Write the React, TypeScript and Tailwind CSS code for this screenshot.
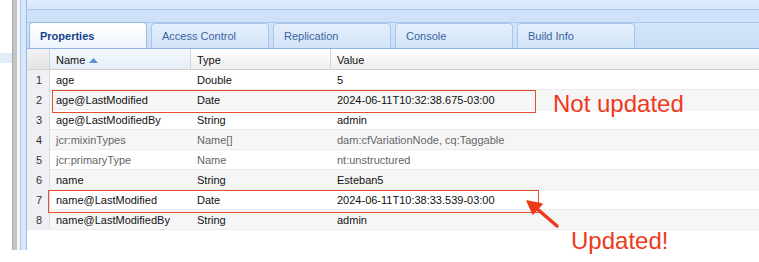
import React from 'react'

const tabs = ['Properties', 'Access Control', 'Replication', 'Console', 'Build Info']

const rows = [
  { name: 'age', type: 'Double', value: '5' },
  { name: 'age@LastModified', type: 'Date', value: '2024-06-11T10:32:38.675-03:00' },
  { name: 'age@LastModifiedBy', type: 'String', value: 'admin' },
  { name: 'jcr:mixinTypes', type: 'Name[]', value: 'dam:cfVariationNode, cq:Taggable', dim: true },
  { name: 'jcr:primaryType', type: 'Name', value: 'nt:unstructured', dim: true },
  { name: 'name', type: 'String', value: 'Esteban5' },
  { name: 'name@LastModified', type: 'Date', value: '2024-06-11T10:38:33.539-03:00' },
  { name: 'name@LastModifiedBy', type: 'String', value: 'admin' },
]

function Tab({ label, active }: { label: string; active: boolean }) {
  return (
    <div
      className={`w-[118px] rounded-t-[4px] border border-b-0 flex items-center pl-[10px] pt-[1px] text-[11px] ${
        active
          ? 'bg-gradient-to-b from-white to-[#eef4fc] border-[#99bbe8] text-[#15428b] font-bold h-[26px]'
          : 'bg-gradient-to-b from-[#e4effc] to-[#d3e4f8] border-[#a9c6ea] text-[#3a64a0] h-[25px]'
      }`}
    >
      {label}
    </div>
  )
}

export default function App() {
  return (
    <div className="relative w-[759px] h-[262px] bg-white overflow-hidden flex font-['Liberation_Sans',Arial,sans-serif] text-[#111]">
      {/* left tree strip */}
      <div className="w-[12px] flex flex-col">
        <div className="h-[53px]" />
        <div className="h-[10px] bg-[#e2edfb]" />
      </div>
      <div className="w-[5px] h-[250px] bg-[#c4c4c4] border-l border-[#adadad]" />
      <div className="w-[3px] h-[250px] bg-[#f4f6f9]" />

      {/* panel */}
      <div className="flex-1 h-[250px] border-l border-[#a9c8ec] bg-[#d8e7fa] pl-[5px] flex">
        <div className="flex-1 border-l border-[#99bbe8] flex flex-col bg-white">
          <div className="h-[10px] bg-gradient-to-b from-[#e0edfc] to-[#d5e6fa] border-b border-[#a8c8ee]" />
          <div className="h-[13px] bg-[#cfe1f8] border-b border-[#a8c8ee]" />
          <div className="h-[26px] bg-gradient-to-b from-[#d3e5fa] to-[#c9ddf6] border-b border-[#8fb4e3] flex items-end gap-[4px] pl-[2px]">
            {tabs.map((t, i) => (
              <Tab key={t} label={t} active={i === 0} />
            ))}
          </div>

          {/* grid header */}
          <div className="h-[21px] flex text-[11px] border-b border-[#d0d0d0] bg-gradient-to-b from-white to-[#eeeeee]">
            <div className="w-[23px] bg-gradient-to-b from-[#f2f2f2] to-[#e4e4e4] border-r border-[#d4d4d4]" />
            <div className="w-[141px] border-r border-[#d4d4d4] flex items-center pl-[6px] pt-[2px] bg-gradient-to-b from-[#f4f8fd] to-[#e6eef8]">
              Name
              <svg width="9" height="5" viewBox="0 0 9 5" className="ml-[4px]">
                <path d="M0 5 L4.5 0 L9 5 Z" fill="#5b8fd0" />
              </svg>
            </div>
            <div className="w-[140px] border-r border-[#d4d4d4] flex items-center pl-[6px] pt-[2px]">Type</div>
            <div className="flex-1 flex items-center pl-[6px] pt-[2px]">Value</div>
          </div>

          {rows.map((r, i) => (
            <div
              key={r.name}
              className={`h-[20px] flex text-[11px] border-b border-[#ebebeb] ${i % 2 === 1 ? 'bg-[#f6f6f7]' : 'bg-white'} ${
                r.dim ? 'text-[#666]' : 'text-[#111]'
              }`}
            >
              <div className="w-[23px] bg-[#eef0f3] border-r border-[#dcdcdc] flex items-center justify-center text-[#333] pl-[2px] pt-[2px]">
                {i + 1}
              </div>
              <div className="w-[141px] flex items-center pl-[6px] pt-[2px]">{r.name}</div>
              <div className="w-[140px] flex items-center pl-[6px] pt-[2px]">{r.type}</div>
              <div className="flex-1 flex items-center pl-[6px] pt-[2px]">{r.value}</div>
            </div>
          ))}
        </div>
      </div>

      {/* annotations */}
      <div className="absolute left-[52px] top-[90px] w-[484px] h-[23px] border-[1.5px] border-[#e4502f]" />
      <div className="absolute left-[48px] top-[190px] w-[491px] h-[23px] border-[1.5px] border-[#e4502f]" />
      <div className="absolute left-[553px] top-[92px] text-[24px] leading-none text-[#ee3a1c]">
        Not updated
      </div>
      <div className="absolute left-[571px] top-[229px] text-[24px] leading-none text-[#ee3a1c]">
        Updated!
      </div>
      <svg className="absolute left-[520px] top-[195px]" width="45" height="40" viewBox="0 0 45 40">
        <line x1="37" y1="31" x2="15" y2="12" stroke="#ee3a1c" strokeWidth="3.5" strokeLinecap="round" />
        <path d="M7 6 L22 9 L13 19 Z" fill="#ee3a1c" stroke="#ee3a1c" strokeWidth="1.5" strokeLinejoin="round" />
      </svg>
    </div>
  )
}
